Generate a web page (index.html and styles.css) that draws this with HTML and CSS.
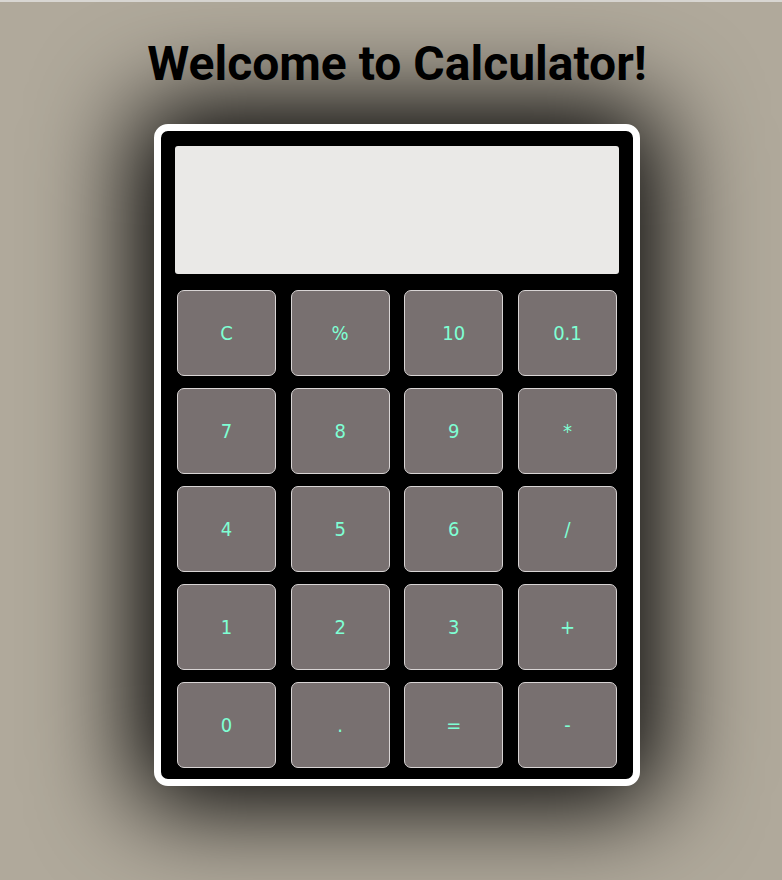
FILE: index.html
```html
<!DOCTYPE html>
<html lang="en">
<head>
<meta charset="utf-8">
<title>Calculator</title>
<link rel="stylesheet" href="styles.css">
</head>
<body>
<div class="topline"></div>
<div class="page">
<h1 class="title">Welcome to Calculator!</h1>
<div class="calculator">
  <div class="display"></div>
  <div class="keys">
    <button class="key">C</button>
    <button class="key">%</button>
    <button class="key">10</button>
    <button class="key">0.1</button>
    <button class="key">7</button>
    <button class="key">8</button>
    <button class="key">9</button>
    <button class="key">*</button>
    <button class="key">4</button>
    <button class="key">5</button>
    <button class="key">6</button>
    <button class="key">/</button>
    <button class="key">1</button>
    <button class="key">2</button>
    <button class="key">3</button>
    <button class="key">+</button>
    <button class="key">0</button>
    <button class="key">.</button>
    <button class="key">=</button>
    <button class="key">-</button>
  </div>
</div>
</div>
</body>
</html>
```
FILE: styles.css
```css
html, body {
  margin: 0;
  padding: 0;
}
body {
  background: #b0a99b;
  height: 880px;
  overflow: hidden;
  font-family: Roboto, "Liberation Sans", sans-serif;
}
.topline {
  height: 2px;
  background: #d8d6d2;
}
.page {
  padding-left: 12px;
}
.title {
  margin: 0;
  padding-top: 34px;
  height: 88px;
  box-sizing: border-box;
  text-align: center;
  font-family: Roboto, sans-serif;
  font-weight: 700;
  font-size: 48px;
  line-height: 56px;
  color: #000;
}
.calculator {
  width: 444px;
  margin: 34px auto 0;
  box-sizing: content-box;
  background: #000;
  border: 7px solid #fff;
  border-radius: 14px;
  padding: 15px 14px 11px 14px;
  box-shadow: 0 0 100px 20px #000;
}
.display {
  width: 444px;
  height: 128px;
  background: #eae9e7;
  border-radius: 3px;
}
.keys {
  margin-top: 16px;
  padding-left: 2px;
  display: grid;
  grid-template-columns: repeat(4, 99px);
  grid-auto-rows: 86px;
  column-gap: 14.67px;
  row-gap: 12px;
}
.key {
  margin: 0;
  padding: 0;
  background: #787070;
  border: 1px solid #d8d4d4;
  border-radius: 7px;
  color: #7fffd4;
  font-family: "DejaVu Sans Condensed", "DejaVu Sans", Verdana, sans-serif;
  font-size: 20px;
}
```
